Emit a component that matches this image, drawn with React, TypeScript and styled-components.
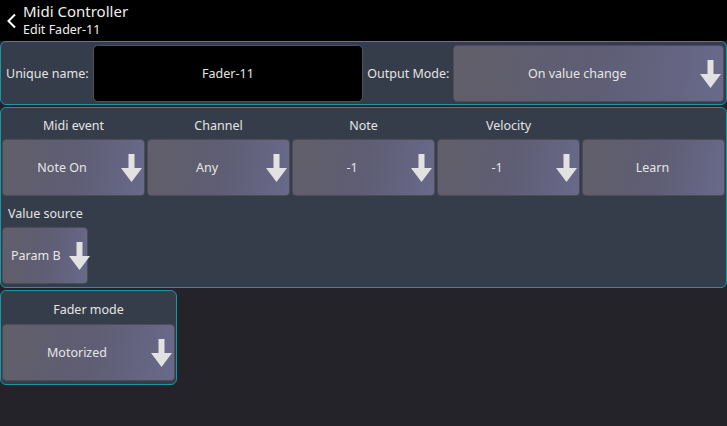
import React from "react";
import styled, { createGlobalStyle } from "styled-components";

const GlobalStyle = createGlobalStyle`
    html, body {
        margin: 0;
        padding: 0;
        background-color: #232329;
    }
    body {
        font-family: "Noto Sans", "Open Sans", sans-serif;
        color: #e4e4e4;
    }
`;

const PageWrapper = styled.div`
    width: 727px;
    height: 426px;
    background-color: #232329;
    overflow: hidden;
`;

const Header = styled.div`
    height: 41px;
    background-color: #000;
    display: flex;
    align-items: center;
    box-sizing: border-box;
`;

const BackButton = styled.div`
    width: 23px;
    display: flex;
    justify-content: center;
`;

const HeaderTitles = styled.div`
    display: flex;
    flex-direction: column;
    margin-top: -2px;
`;

const Title = styled.div`
    font-size: 15px;
    line-height: 19px;
    color: #f0f0f0;
`;

const SubTitle = styled.div`
    font-size: 12.5px;
    line-height: 17px;
    color: #f0f0f0;
`;

const Panel = styled.div<{ $width?: number; $first?: boolean }>`
    background-color: #353d4a;
    border: 1px solid #1797a8;
    border-radius: 6px;
    box-sizing: border-box;
    width: ${(p) => (p.$width ? `${p.$width}px` : "100%")};
    margin-top: ${(p) => (p.$first ? "0" : "2px")};
`;

const NameRow = styled.div`
    display: grid;
    grid-template-columns: auto 1fr auto 1fr;
    align-items: center;
    padding: 3px 2px 2px 5px;
    column-gap: 4px;
`;

const InlineLabel = styled.div`
    font-size: 12.5px;
`;

const NameInput = styled.div`
    height: 57px;
    background-color: #000;
    border: 1px solid #50535a;
    border-radius: 5px;
    box-sizing: border-box;
    display: flex;
    align-items: center;
    justify-content: center;
    font-size: 12.5px;
`;

const ColumnGrid = styled.div`
    display: grid;
    grid-template-columns: repeat(5, 1fr);
    column-gap: 2px;
    padding: 0 1px;
`;

const Column = styled.div`
    display: flex;
    flex-direction: column;
`;

const ColumnLabel = styled.div<{ $align?: string; $tall?: boolean }>`
    height: ${(p) => (p.$tall ? "33px" : "31px")};
    box-sizing: border-box;
    padding-top: 3px;
    display: flex;
    align-items: center;
    justify-content: ${(p) => p.$align || "center"};
    padding-left: ${(p) => (p.$align ? "6px" : "0")};
    font-size: 12.5px;
`;

const SelectButton = styled.div<{ $width?: number; $compact?: boolean }>`
    height: 57px;
    width: ${(p) => (p.$width ? `${p.$width}px` : "auto")};
    box-sizing: border-box;
    border: 1px solid #4d4d5a;
    border-radius: 4px;
    background: linear-gradient(100deg, #615f69 0%, #5e5d73 50%, #69698b 100%);
    display: flex;
    align-items: center;
    gap: ${(p) => (p.$compact ? "8px" : "0")};
    padding: ${(p) => (p.$compact ? "0 2px 0 8px" : "0 2px 0 0")};
    font-size: 12.5px;
    color: #e6e6e6;

    svg {
        flex-shrink: 0;
    }
`;

const SelectText = styled.div<{ $compact?: boolean }>`
    flex: ${(p) => (p.$compact ? "0 0 auto" : "1")};
    text-align: center;
    white-space: nowrap;
`;

const SourceArea = styled.div`
    padding: 0 1px 3px 1px;
`;

const Arrow = () => (
    <svg width="21" height="28" viewBox="0 0 21 28">
        <rect x="7.5" y="0" width="6" height="14" fill="#e2e2e2" />
        <polygon points="0,14 21,14 10.5,28" fill="#e2e2e2" />
    </svg>
);

const Select = ({ value, arrow = true }: { value: string; arrow?: boolean }) => (
    <SelectButton>
        <SelectText>{value}</SelectText>
        {arrow && <Arrow />}
    </SelectButton>
);

const columns = [
    { label: "Midi event", value: "Note On" },
    { label: "Channel", value: "Any" },
    { label: "Note", value: "-1" },
    { label: "Velocity", value: "-1" },
];

export default function App() {
    return (
        <PageWrapper>
            <GlobalStyle />
            <Header>
                <BackButton>
                    <svg width="11" height="16" viewBox="0 0 11 16">
                        <polyline points="9,1.5 2.5,8 9,14.5" fill="none" stroke="#fff" strokeWidth="2" />
                    </svg>
                </BackButton>
                <HeaderTitles>
                    <Title>Midi Controller</Title>
                    <SubTitle>Edit Fader-11</SubTitle>
                </HeaderTitles>
            </Header>

            <Panel $first>
                <NameRow>
                    <InlineLabel>Unique name:</InlineLabel>
                    <NameInput>Fader-11</NameInput>
                    <InlineLabel>Output Mode:</InlineLabel>
                    <Select value="On value change" />
                </NameRow>
            </Panel>

            <Panel>
                <ColumnGrid>
                    {columns.map((c) => (
                        <Column key={c.label}>
                            <ColumnLabel>{c.label}</ColumnLabel>
                            <Select value={c.value} />
                        </Column>
                    ))}
                    <Column>
                        <ColumnLabel />
                        <Select value="Learn" arrow={false} />
                    </Column>
                </ColumnGrid>
                <SourceArea>
                    <ColumnLabel $align="flex-start">Value source</ColumnLabel>
                    <SelectButton $width={86} $compact>
                        <SelectText $compact>Param B</SelectText>
                        <Arrow />
                    </SelectButton>
                </SourceArea>
            </Panel>

            <Panel $width={177}>
                <SourceArea>
                    <ColumnLabel $tall>Fader mode</ColumnLabel>
                    <Select value="Motorized" />
                </SourceArea>
            </Panel>
        </PageWrapper>
    );
}
